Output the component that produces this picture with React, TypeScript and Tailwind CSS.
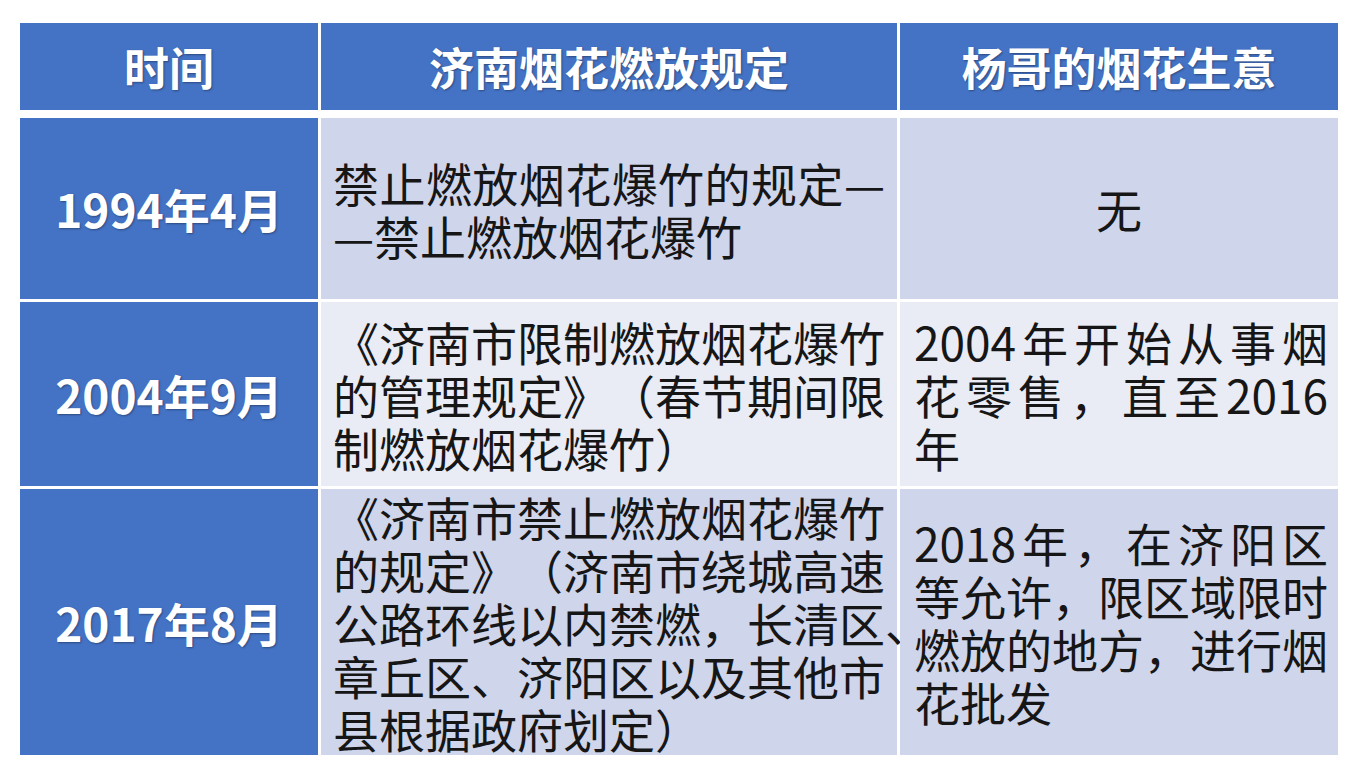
import React from 'react';

const font = "font-['Noto_Sans_CJK_SC',sans-serif]";

type Line = { text: string; last?: boolean };

function Lines({ lines }: { lines: string[] }) {
  return (
    <div className="w-full">
      {lines.map((t, i) => (
        <div
          key={i}
          className={
            'whitespace-nowrap ' +
            (i < lines.length - 1 ? 'text-justify [text-align-last:justify]' : 'text-left')
          }
        >
          {t}
        </div>
      ))}
    </div>
  );
}

const rows = [
  {
    time: '1994年4月',
    bg: 'bg-[#cfd5ea]',
    h: 'h-[181px]',
    rule: ['禁止燃放烟花爆竹的规定—', '—禁止燃放烟花爆竹'],
    biz: null as string[] | null,
  },
  {
    time: '2004年9月',
    bg: 'bg-[#e9ebf5]',
    h: 'h-[184px]',
    rule: ['《济南市限制燃放烟花爆竹', '的管理规定》（春节期间限', '制燃放烟花爆竹）'],
    biz: ['2004年开始从事烟', '花零售，直至2016', '年'],
  },
  {
    time: '2017年8月',
    bg: 'bg-[#cfd5ea]',
    h: 'h-[266px]',
    rule: [
      '《济南市禁止燃放烟花爆竹',
      '的规定》（济南市绕城高速',
      '公路环线以内禁燃，长清区、',
      '章丘区、济阳区以及其他市',
      '县根据政府划定）',
    ],
    biz: ['2018年，在济阳区', '等允许，限区域限时', '燃放的地方，进行烟', '花批发'],
  },
];

const cols = 'grid grid-cols-[298px_576px_438px] gap-x-[3px]';
const shadow = '[text-shadow:1px_1px_2px_rgba(0,0,0,0.35)]';

export default function App() {
  return (
    <div
      className={`w-[1362px] h-[784px] bg-white pl-[20px] pt-[23px] text-[46px] leading-[53px] text-[#161616] ${font} [text-spacing-trim:space-all]`}
    >
      <div className={`${cols} h-[87px] mb-[8px]`}>
        {['时间', '济南烟花燃放规定', '杨哥的烟花生意'].map((t) => (
          <div
            key={t}
            className={`bg-[#4472c4] flex items-center justify-center text-white font-bold text-[45px] ${shadow}`}
          >
            {t}
          </div>
        ))}
      </div>

      <div className="flex flex-col gap-y-[3px]">
        {rows.map((r) => (
          <div key={r.time} className={`${cols} ${r.h}`}>
            <div
              className={`bg-[#4472c4] flex items-center justify-center text-white font-bold text-[46px] ${shadow}`}
            >
              {r.time}
            </div>
            <div className={`${r.bg} flex items-center pl-[12px] pr-[12px]`}>
              <Lines lines={r.rule} />
            </div>
            {r.biz ? (
              <div className={`${r.bg} flex items-center pl-[14px] pr-[10px]`}>
                <Lines lines={r.biz} />
              </div>
            ) : (
              <div className={`${r.bg} flex items-center justify-center`}>无</div>
            )}
          </div>
        ))}
      </div>
    </div>
  );
}
